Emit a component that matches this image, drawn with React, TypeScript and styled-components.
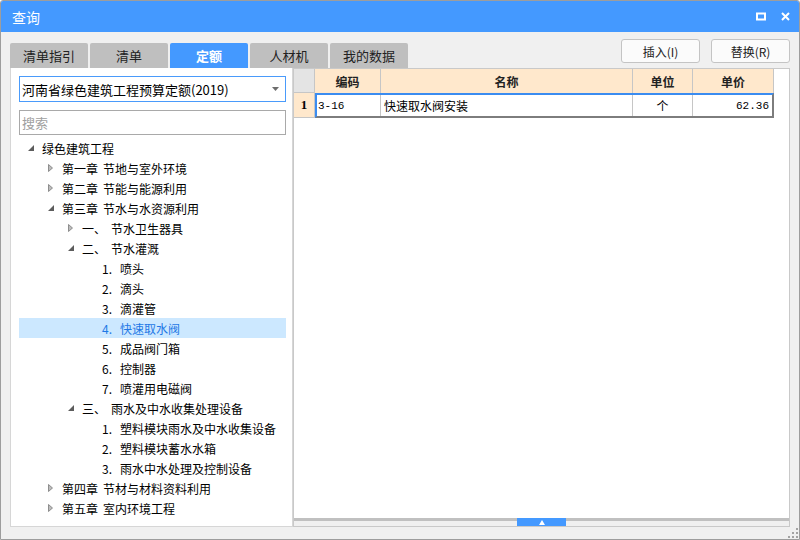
import React from 'react';
import styled, {createGlobalStyle} from 'styled-components';

const colors = {
  blue: '#4499ff',
  panelBg: '#f0f0f0',
  tabGrey: '#bfbfbf',
  line: '#c6c6c6',
  peach: '#ffe8cc',
  selectBg: '#cce8ff',
  selectText: '#1f78e6',
};

const GlobalStyle = createGlobalStyle`
  html, body { margin: 0; padding: 0; background: #ffffff; }
  body {
    font-family: "Noto Sans CJK SC", "Liberation Sans", sans-serif;
    font-size: 12px;
    color: #000;
  }
  * { box-sizing: border-box; }
`;

const Window = styled.div`
  position: relative;
  width: 800px;
  height: 540px;
  border: 1px solid #9d9d9d;
  border-radius: 3px 3px 0 0;
  background: ${colors.panelBg};
  display: flex;
  flex-direction: column;
  overflow: hidden;
`;

const TitleBar = styled.div`
  height: 31px;
  flex: none;
  background: ${colors.blue};
  color: #fff;
  display: flex;
  align-items: center;
  justify-content: space-between;
  padding: 0 9px 0 11px;
  font-size: 14px;
`;

const TitleIcons = styled.div`
  display: flex;
  align-items: center;
  gap: 15px;
`;

const TopStrip = styled.div`
  height: 36px;
  flex: none;
  display: flex;
  justify-content: space-between;
  padding: 0 9px;
`;

const Tabs = styled.div`
  align-self: flex-end;
  display: flex;
  gap: 2px;
`;

const Tab = styled.div<{$active?: boolean}>`
  width: 78px;
  height: 25px;
  border-radius: 2px 2px 0 0;
  background: ${p => (p.$active ? colors.blue : colors.tabGrey)};
  color: ${p => (p.$active ? '#fff' : '#222')};
  font-weight: ${p => (p.$active ? 700 : 400)};
  font-size: 13px;
  display: flex;
  align-items: center;
  justify-content: center;
`;

const Actions = styled.div`
  margin-top: 7px;
  display: flex;
  gap: 11px;
`;

const ActionButton = styled.div`
  width: 79px;
  height: 24px;
  border: 1px solid #c4c4c4;
  border-radius: 3px;
  background: #fbfbfb;
  color: #222;
  font-size: 12px;
  display: flex;
  align-items: center;
  justify-content: center;
`;

const Content = styled.div`
  height: 459px;
  flex: none;
  display: flex;
  padding: 0 8px 0 9px;
`;

const LeftPanel = styled.div`
  width: 283px;
  flex: none;
  background: #fff;
  border: 1px solid #d6d6d6;
  border-top: none;
  padding: 8px 6px 0 8px;
  display: flex;
  flex-direction: column;
`;

const Dropdown = styled.div`
  height: 26px;
  border: 1px solid #4a9bfb;
  display: flex;
  align-items: center;
  justify-content: space-between;
  padding: 0 6px 0 2px;
  font-size: 13px;
`;

const SearchBox = styled.input`
  margin-top: 8px;
  height: 25px;
  border: 1px solid #a9a9a9;
  padding: 0 2px;
  font-family: "Noto Sans CJK SC", "Liberation Sans", sans-serif;
  font-size: 13px;
  outline: none;
  &::placeholder { color: #a0a0a0; }
`;

const Tree = styled.div`
  margin-top: 3px;
  display: flex;
  flex-direction: column;
`;

const TreeRow = styled.div<{$level: number; $selected?: boolean}>`
  height: 20px;
  display: flex;
  align-items: center;
  padding-left: ${p => p.$level * 20}px;
  background: ${p => (p.$selected ? colors.selectBg : 'transparent')};
  color: ${p => (p.$selected ? colors.selectText : '#000')};
  white-space: nowrap;
`;

const Toggle = styled.span`
  width: 23px;
  flex: none;
  padding-left: 9px;
  display: flex;
  align-items: center;
`;

const Prefix = styled.span<{$num?: boolean}>`
  flex: none;
  width: ${p => (p.$num ? '18px' : 'auto')};
  margin-right: ${p => (p.$num ? '0' : '5px')};
`;

const RightPanel = styled.div`
  width: 497px;
  flex: none;
  background: #fff;
  border: 1px solid #c9c9c9;
  display: flex;
  flex-direction: column;
`;

const TableArea = styled.div`
  flex: 1;
`;

const HeaderRow = styled.div`
  height: 24px;
  display: flex;
`;

const HeadCell = styled.div<{$w: number; $corner?: boolean}>`
  width: ${p => p.$w}px;
  flex: none;
  background: ${p => (p.$corner ? '#e4e4e4' : colors.peach)};
  border-right: 1px solid ${colors.line};
  border-bottom: ${p => (p.$corner ? `1px solid ${colors.line}` : 'none')};
  font-weight: 700;
  color: #222;
  display: flex;
  align-items: center;
  justify-content: center;
`;

const DataRow = styled.div`
  height: 25px;
  display: flex;
`;

const RowHead = styled.div`
  width: 21px;
  flex: none;
  background: ${colors.peach};
  border-right: 1px solid ${colors.line};
  border-bottom: 1px solid ${colors.line};
  font-family: "Liberation Serif", serif;
  font-weight: 700;
  font-size: 13px;
  display: flex;
  align-items: center;
  justify-content: center;
`;

const Selection = styled.div`
  display: flex;
  border-top: 2px solid #3b8cf0;
  border-left: 2px solid #3b8cf0;
  border-right: 2px solid #7d7d7d;
  border-bottom: 2px solid #7d7d7d;
`;

const Cell = styled.div<{$w: number; $align?: 'left' | 'center' | 'right'; $mono?: boolean; $last?: boolean}>`
  width: ${p => p.$w}px;
  flex: none;
  border-right: ${p => (p.$last ? 'none' : `1px solid ${colors.line}`)};
  display: flex;
  align-items: center;
  justify-content: ${p => (p.$align === 'right' ? 'flex-end' : p.$align === 'center' ? 'center' : 'flex-start')};
  padding: 0 3px 0 ${p => (p.$mono ? '1px' : '3px')};
  font-family: ${p => (p.$mono ? '"Liberation Mono", monospace' : 'inherit')};
  font-size: ${p => (p.$mono ? '11px' : '12px')};
`;

const Splitter = styled.div`
  height: 8px;
  flex: none;
  display: grid;
  grid-template-columns: 1fr 49px 1fr;
`;

const SplitSide = styled.div`
  border-top: 3px solid #c0c0c0;
  background: ${colors.panelBg};
`;

const SplitHandle = styled.div`
  background: ${colors.blue};
  display: flex;
  align-items: center;
  justify-content: center;
`;

const Grip = styled.svg`
  position: absolute;
  right: 1px;
  bottom: 1px;
`;

type Node = {
  level: number;
  toggle?: 'open' | 'closed';
  prefix?: string;
  num?: boolean;
  text: string;
  selected?: boolean;
};

const tree: Node[] = [
  {level: 0, toggle: 'open', text: '绿色建筑工程'},
  {level: 1, toggle: 'closed', prefix: '第一章', text: '节地与室外环境'},
  {level: 1, toggle: 'closed', prefix: '第二章', text: '节能与能源利用'},
  {level: 1, toggle: 'open', prefix: '第三章', text: '节水与水资源利用'},
  {level: 2, toggle: 'closed', prefix: '一、', text: '节水卫生器具'},
  {level: 2, toggle: 'open', prefix: '二、', text: '节水灌溉'},
  {level: 3, prefix: '1.', num: true, text: '喷头'},
  {level: 3, prefix: '2.', num: true, text: '滴头'},
  {level: 3, prefix: '3.', num: true, text: '滴灌管'},
  {level: 3, prefix: '4.', num: true, text: '快速取水阀', selected: true},
  {level: 3, prefix: '5.', num: true, text: '成品阀门箱'},
  {level: 3, prefix: '6.', num: true, text: '控制器'},
  {level: 3, prefix: '7.', num: true, text: '喷灌用电磁阀'},
  {level: 2, toggle: 'open', prefix: '三、', text: '雨水及中水收集处理设备'},
  {level: 3, prefix: '1.', num: true, text: '塑料模块雨水及中水收集设备'},
  {level: 3, prefix: '2.', num: true, text: '塑料模块蓄水水箱'},
  {level: 3, prefix: '3.', num: true, text: '雨水中水处理及控制设备'},
  {level: 1, toggle: 'closed', prefix: '第四章', text: '节材与材料资料利用'},
  {level: 1, toggle: 'closed', prefix: '第五章', text: '室内环境工程'},
];

const tabs = ['清单指引', '清单', '定额', '人材机', '我的数据'];

function Arrow({open}: {open?: boolean}) {
  if (open) {
    return (
      <svg width="6" height="6" viewBox="0 0 6 6">
        <polygon points="6,0 6,6 0,6" fill="#5c5c5c" />
      </svg>
    );
  }
  return (
    <svg width="5" height="8" viewBox="0 0 5 8">
      <polygon points="0.5,0.5 4.5,4 0.5,7.5" fill="#bdbdbd" stroke="#7a7a7a" strokeWidth="0.8" />
    </svg>
  );
}

function App() {
  function render() {
    return (
      <>
        <GlobalStyle />
        <Window>
          <TitleBar>
            <span>查询</span>
            <TitleIcons>
              <svg width="10" height="9" viewBox="0 0 10 9">
                <rect x="1" y="1.5" width="8" height="6" fill="none" stroke="#fff" strokeWidth="2" />
              </svg>
              <svg width="9" height="9" viewBox="0 0 9 9">
                <path d="M1 1 L8 8 M8 1 L1 8" stroke="#fff" strokeWidth="2" />
              </svg>
            </TitleIcons>
          </TitleBar>

          <TopStrip>
            <Tabs>
              {tabs.map(t => (
                <Tab key={t} $active={t === '定额'}>
                  {t}
                </Tab>
              ))}
            </Tabs>
            <Actions>
              <ActionButton>插入(I)</ActionButton>
              <ActionButton>替换(R)</ActionButton>
            </Actions>
          </TopStrip>

          <Content>
            <LeftPanel>
              <Dropdown>
                <span>河南省绿色建筑工程预算定额(2019)</span>
                <svg width="7" height="4" viewBox="0 0 7 4">
                  <polygon points="0,0 7,0 3.5,4" fill="#6d6d6d" />
                </svg>
              </Dropdown>
              <SearchBox placeholder="搜索" />
              <Tree>
                {tree.map((n, i) => (
                  <TreeRow key={i} $level={n.level} $selected={n.selected}>
                    <Toggle>{n.toggle && <Arrow open={n.toggle === 'open'} />}</Toggle>
                    {n.prefix && <Prefix $num={n.num}>{n.prefix}</Prefix>}
                    <span>{n.text}</span>
                  </TreeRow>
                ))}
              </Tree>
            </LeftPanel>

            <RightPanel>
              <TableArea>
                <HeaderRow>
                  <HeadCell $w={21} $corner />
                  <HeadCell $w={66}>编码</HeadCell>
                  <HeadCell $w={252}>名称</HeadCell>
                  <HeadCell $w={60}>单位</HeadCell>
                  <HeadCell $w={81}>单价</HeadCell>
                </HeaderRow>
                <DataRow>
                  <RowHead>1</RowHead>
                  <Selection>
                    <Cell $w={64} $mono>3-16</Cell>
                    <Cell $w={252}>快速取水阀安装</Cell>
                    <Cell $w={60} $align="center">个</Cell>
                    <Cell $w={79} $align="right" $mono $last>62.36</Cell>
                  </Selection>
                </DataRow>
              </TableArea>
              <Splitter>
                <SplitSide />
                <SplitHandle>
                  <svg width="6" height="5" viewBox="0 0 6 5">
                    <polygon points="3,0 6,5 0,5" fill="#fff" />
                  </svg>
                </SplitHandle>
                <SplitSide />
              </Splitter>
            </RightPanel>
          </Content>

          <Grip width="10" height="10" viewBox="0 0 10 10">
            <rect x="8" y="0" width="2" height="2" fill="#a3a3a3" />
            <rect x="4" y="4" width="2" height="2" fill="#a3a3a3" />
            <rect x="8" y="4" width="2" height="2" fill="#a3a3a3" />
            <rect x="0" y="8" width="2" height="2" fill="#a3a3a3" />
            <rect x="4" y="8" width="2" height="2" fill="#a3a3a3" />
            <rect x="8" y="8" width="2" height="2" fill="#a3a3a3" />
          </Grip>
        </Window>
      </>
    );
  }
  return render();
}

export default App;
